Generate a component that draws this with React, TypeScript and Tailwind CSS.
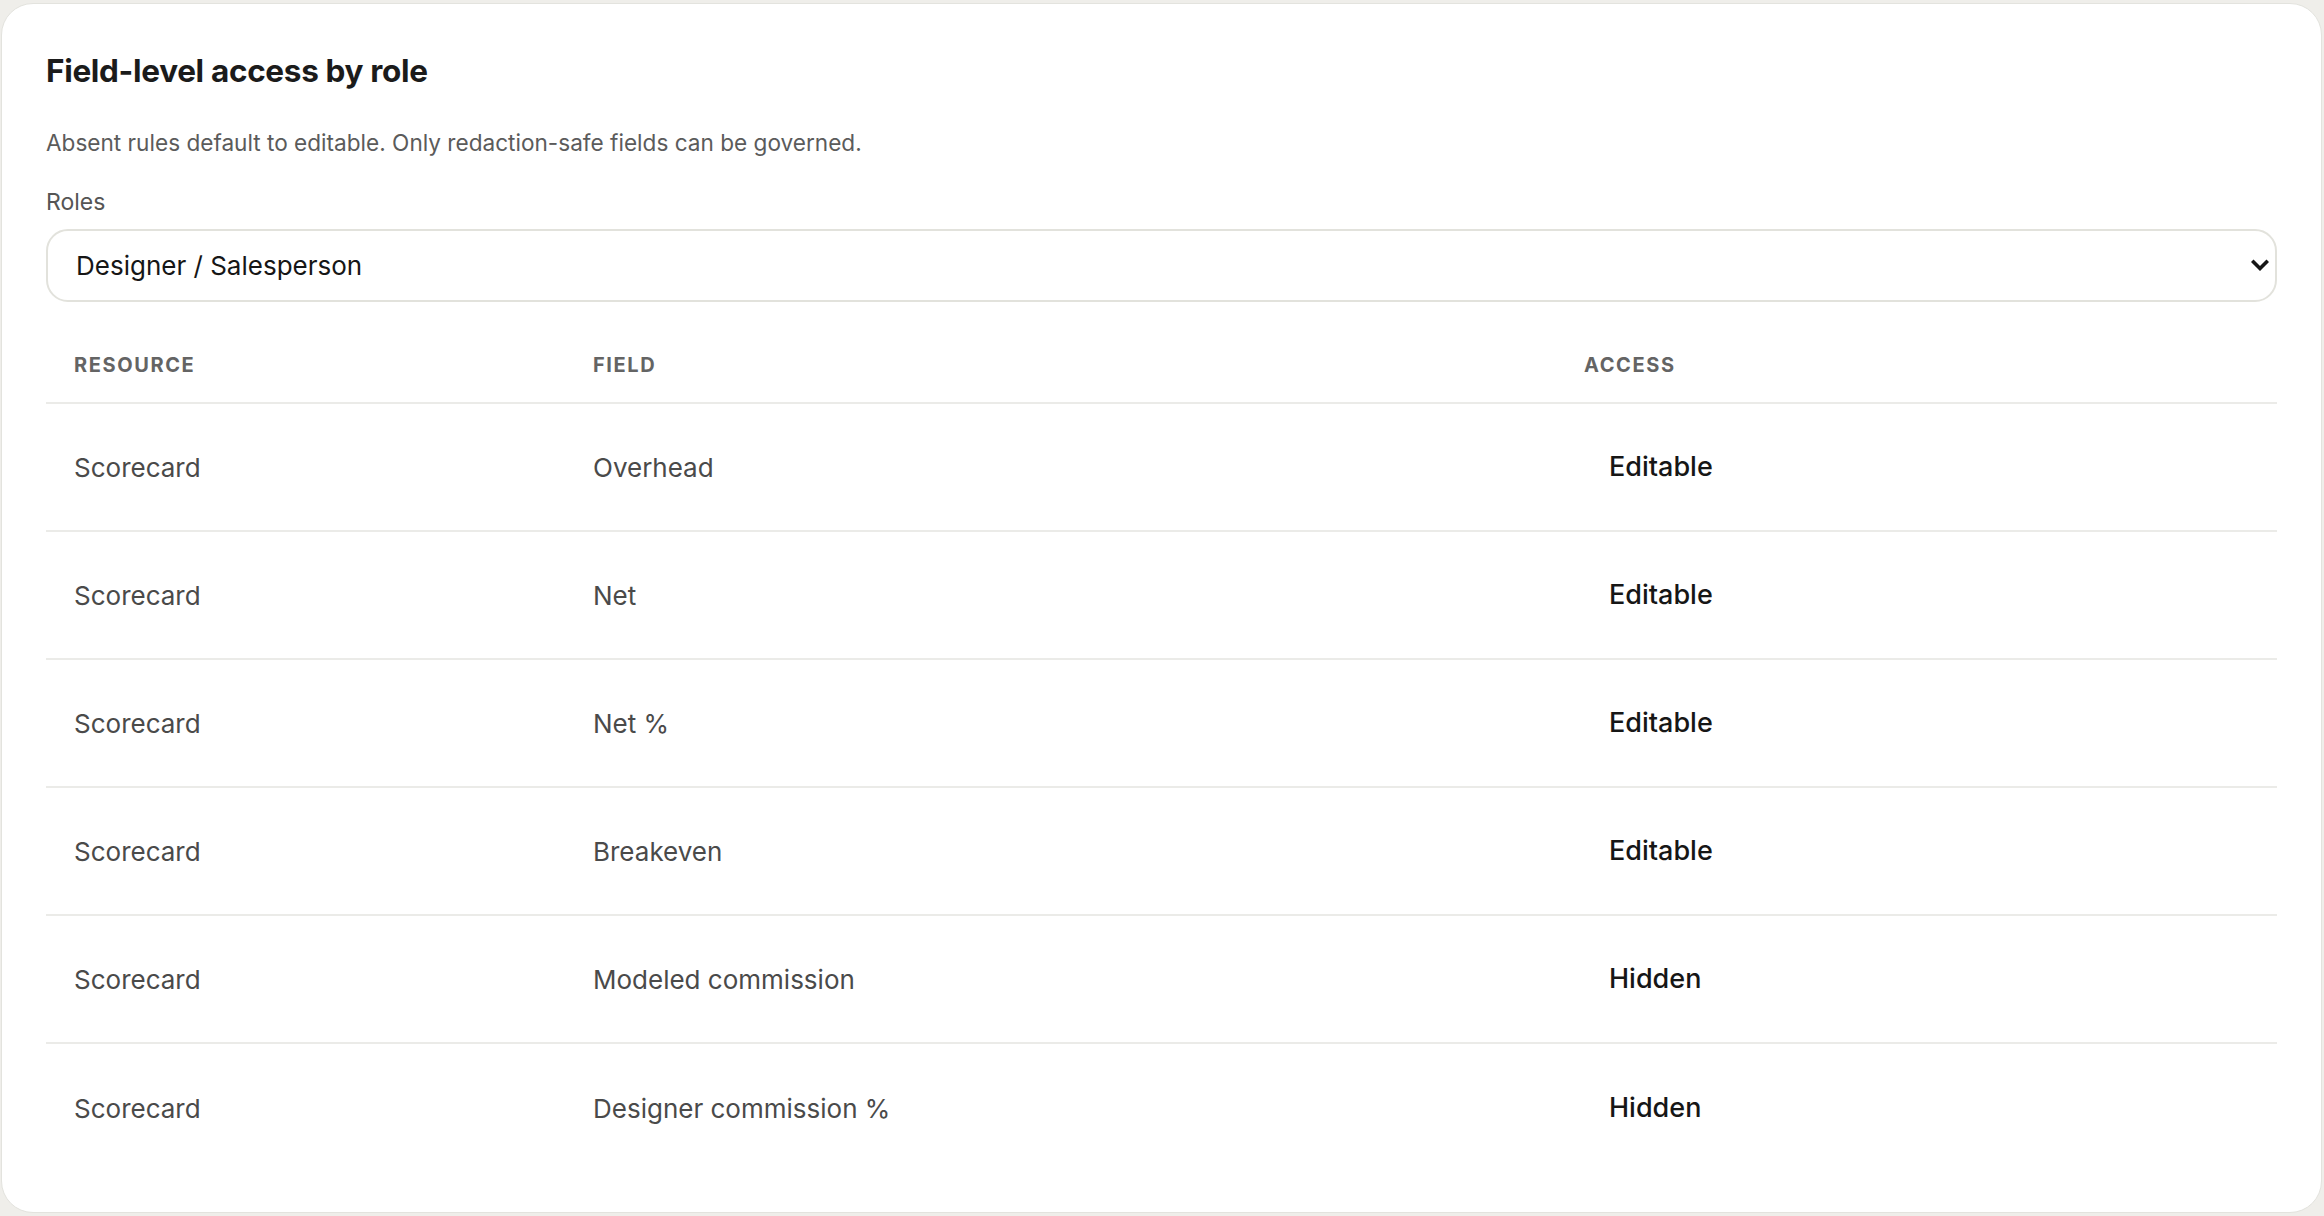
import React, { useState } from 'react';

type Access = 'Editable' | 'Hidden';

interface FieldRule {
    resource: string;
    field: string;
    access: Access;
}

const rules: FieldRule[] = [
    { resource: 'Scorecard', field: 'Overhead', access: 'Editable' },
    { resource: 'Scorecard', field: 'Net', access: 'Editable' },
    { resource: 'Scorecard', field: 'Net %', access: 'Editable' },
    { resource: 'Scorecard', field: 'Breakeven', access: 'Editable' },
    { resource: 'Scorecard', field: 'Modeled commission', access: 'Hidden' },
    { resource: 'Scorecard', field: 'Designer commission %', access: 'Hidden' },
];

const roles = ['Designer / Salesperson', 'Manager', 'Admin'];

const ChevronDown: React.FC = () => (
    <svg width="18" height="13" viewBox="0 0 18 13" fill="none">
        <path d="M2.5 3 L9 9.5 L15.5 3" stroke="#161616" strokeWidth="3.6" strokeLinecap="square" />
    </svg>
);

const App: React.FC = () => {
    const [role, setRole] = useState(roles[0]);

    return (
        <div
            className="min-h-screen bg-[#efeeea] pl-[1px] pr-[2px] pt-[3px] pb-[3px]"
            style={{ fontFamily: 'Inter, "Noto Sans", sans-serif' }}
        >
            <div className="bg-white rounded-[32px] border border-[#e3e3de] px-[44px] pt-[48px] pb-[40px]">
                <h3 className="text-[31.5px] leading-[38px] font-bold text-[#1b1b1b] tracking-[-0.01em]">
                    Field-level access by role
                </h3>
                <p className="mt-[37px] text-[22.6px] leading-[32px] text-[#5b5b5b]">
                    Absent rules default to editable. Only redaction-safe fields can be governed.
                </p>

                <label className="block mt-[28px] text-[23px] leading-[30px] text-[#555555]">Roles</label>
                <div className="relative mt-[12px]">
                    <select
                        value={role}
                        onChange={e => setRole(e.target.value)}
                        className="w-full h-[73px] appearance-none rounded-[22px] border-2 border-[#e2e2dc] bg-white pl-[28px] pr-[60px] text-[26px] text-[#161616] outline-none"
                    >
                        {roles.map(r => (
                            <option key={r} value={r}>{r}</option>
                        ))}
                    </select>
                    <div className="pointer-events-none absolute right-[8px] top-[30px]">
                        <ChevronDown />
                    </div>
                </div>

                <div className="mt-[20px]">
                    <div className="grid grid-cols-[519px_991px_1fr] h-[82px] pt-[5px] items-center border-b-2 border-[#ebebe8] text-[20px] font-bold tracking-[0.08em] uppercase text-[#646464]">
                        <div className="pl-[28px]">Resource</div>
                        <div className="pl-[28px]">Field</div>
                        <div className="pl-[28px]">Access</div>
                    </div>
                    {rules.map((rule, idx) => (
                        <div
                            key={idx}
                            className={
                                'grid grid-cols-[519px_991px_1fr] h-[128px] items-center ' +
                                (idx < rules.length - 1 ? 'border-b-2 border-[#ebebe8]' : '')
                            }
                        >
                            <div className="pl-[28px] text-[26px] text-[#4a4a4a]">{rule.resource}</div>
                            <div className="pl-[28px] text-[26px] text-[#4a4a4a]">{rule.field}</div>
                            <div className="pl-[53px] text-[27px] font-medium text-[#161616]">{rule.access}</div>
                        </div>
                    ))}
                </div>
            </div>
        </div>
    );
};

export default App;
